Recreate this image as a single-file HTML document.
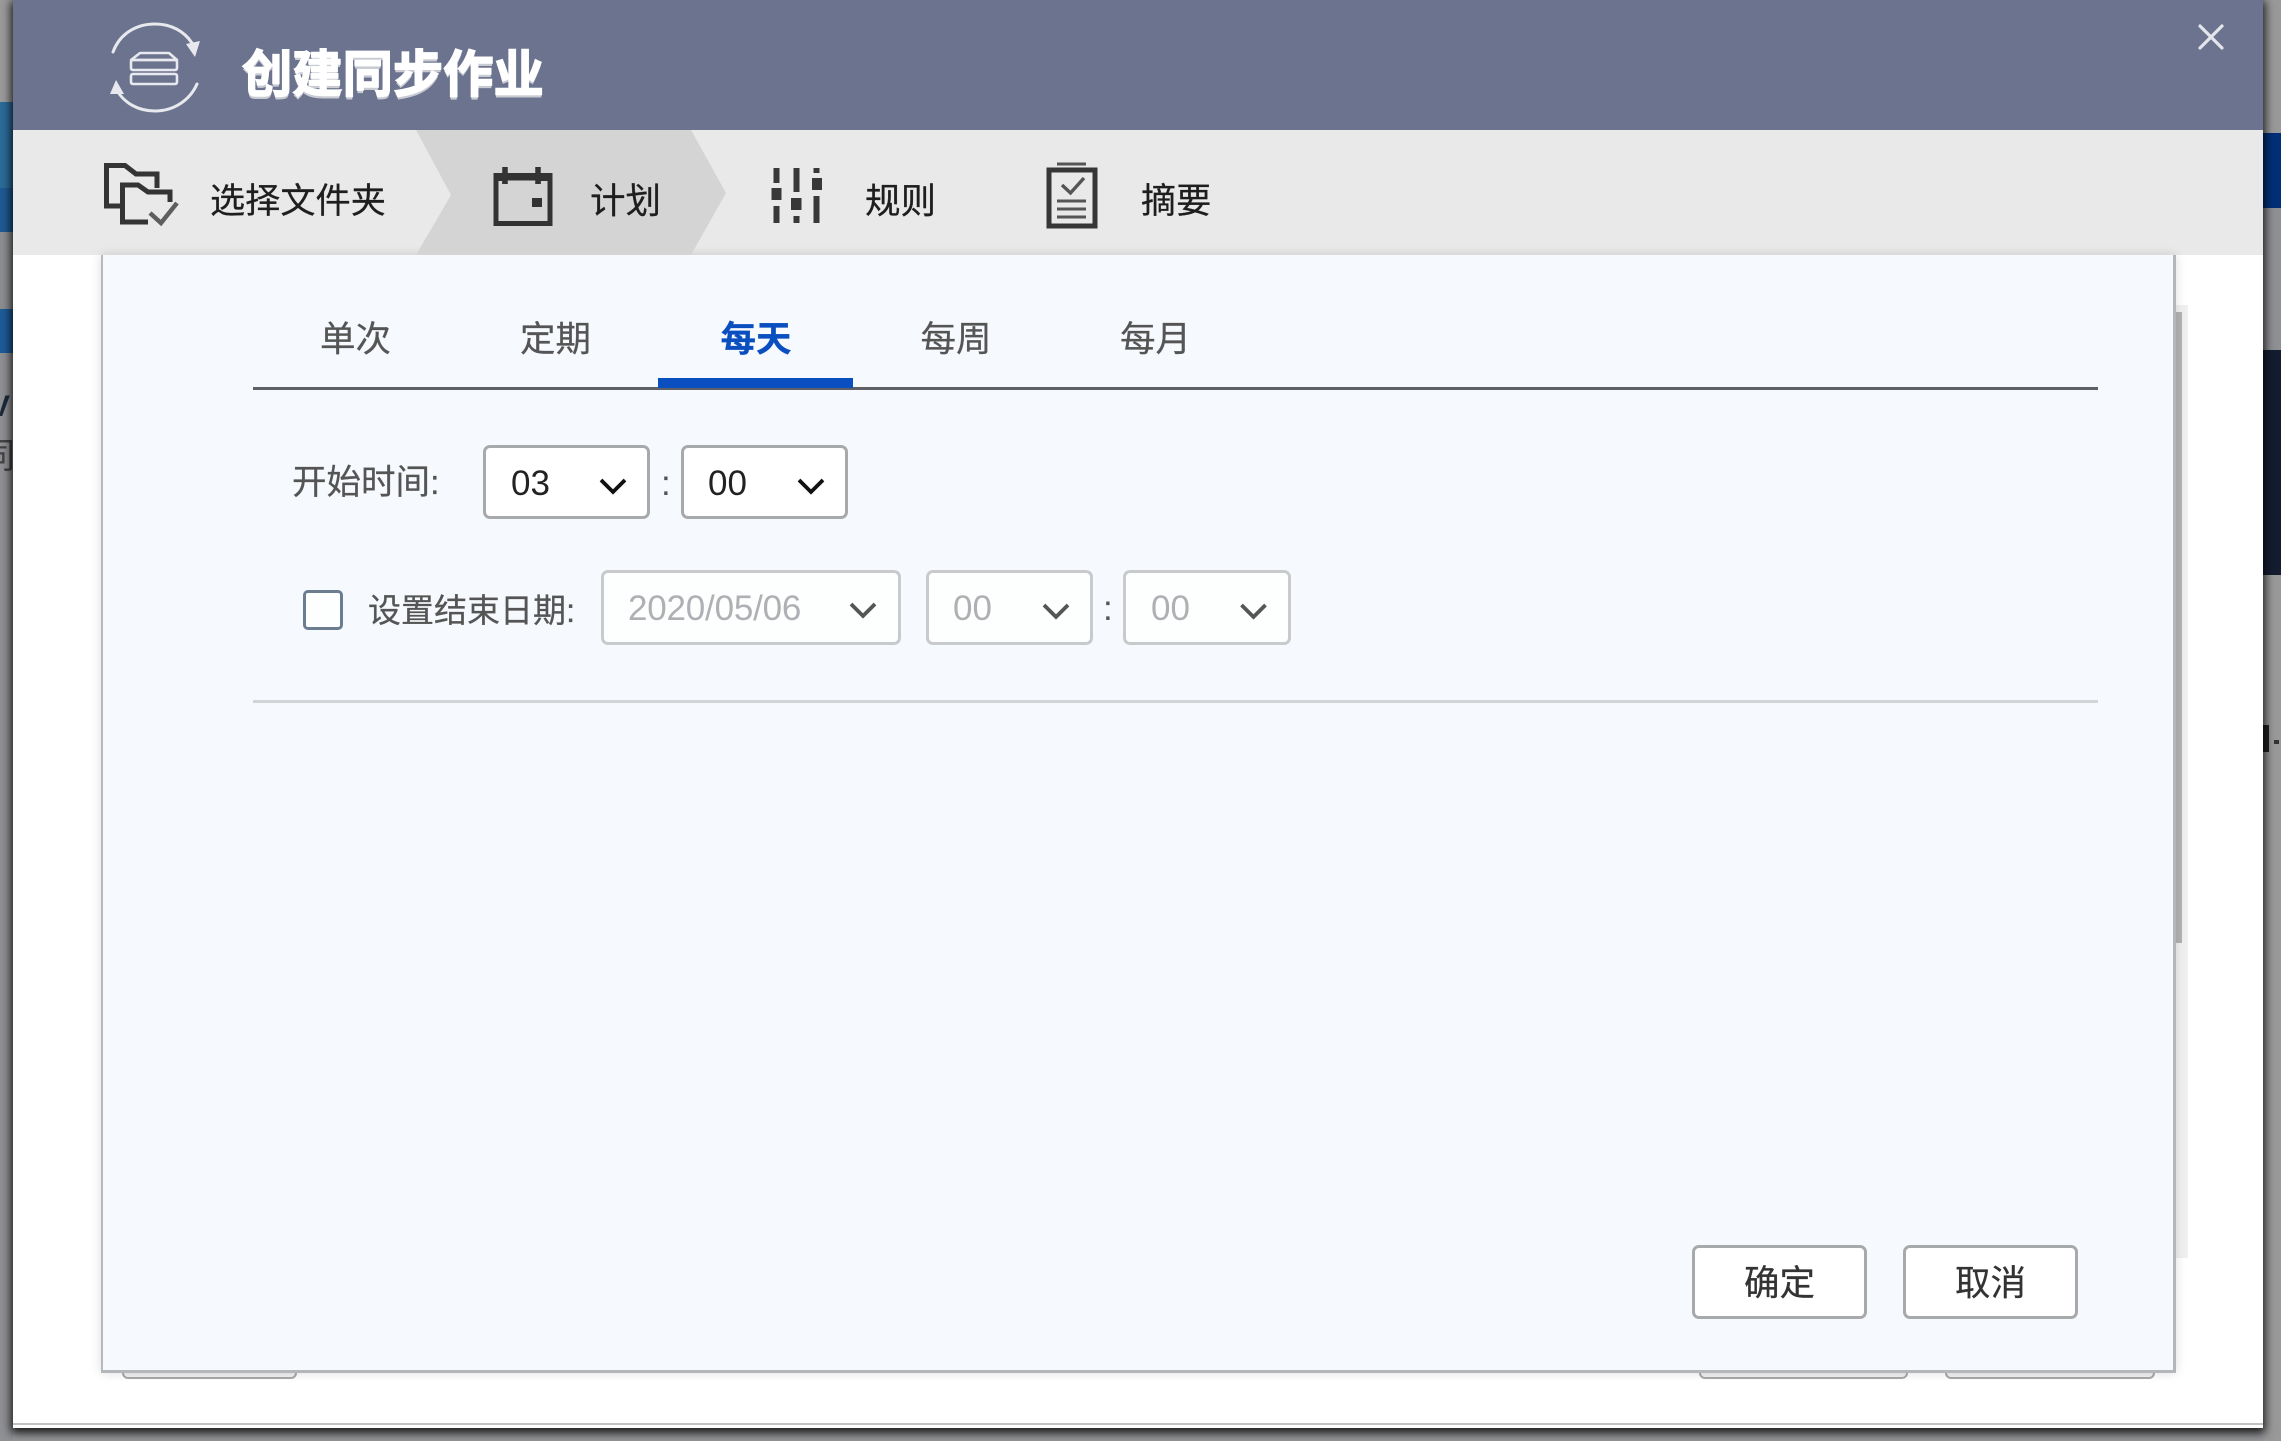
<!DOCTYPE html>
<html lang="zh">
<head>
<meta charset="utf-8">
<title>创建同步作业</title>
<style>
html,body{margin:0;padding:0;width:2281px;height:1441px;overflow:hidden;background:#97989b;}
body{position:relative;font-family:"Liberation Sans","Noto Sans CJK SC",sans-serif;}
.a{position:absolute;}
.t{position:absolute;white-space:nowrap;font-size:35px;line-height:35px;color:#555;}
.c{font-size:35.500px;-webkit-text-stroke:.25px currentColor;}
.box{position:absolute;box-sizing:border-box;background:#fff;border:3px solid #a8a9ab;border-radius:7px;}
.dis{border-color:#c8cacc;background:#fdfefe;}
</style>
</head>
<body>
<!-- background page strips -->
<div class="a" style="left:0;top:0;width:13px;height:102px;background:#9b9b9b"></div>
<div class="a" style="left:0;top:102px;width:13px;height:86px;background:#2b6c9a"></div>
<div class="a" style="left:0;top:188px;width:13px;height:44px;background:#1f5a94"></div>
<div class="a" style="left:0;top:232px;width:13px;height:77px;background:#8d8e92"></div>
<div class="a" style="left:0;top:309px;width:13px;height:44px;background:#1d5c9a"></div>
<div class="a" style="left:0;top:353px;width:13px;height:1088px;background:#909195"></div>
<div class="t" style="left:-10px;top:392px;font-size:30px;line-height:30px;font-weight:700;color:#1c2a3a">V</div>
<div class="t" style="left:-20px;top:439px;color:#444">同</div>
<div class="a" style="left:2263px;top:0;width:18px;height:133px;background:#999"></div>
<div class="a" style="left:2263px;top:133px;width:18px;height:75px;background:#002f78"></div>
<div class="a" style="left:2263px;top:208px;width:18px;height:142px;background:#8f9093"></div>
<div class="a" style="left:2263px;top:350px;width:18px;height:225px;background:#141d30"></div>
<div class="a" style="left:2263px;top:575px;width:18px;height:866px;background:#999"></div>
<div class="a" style="left:2263px;top:725px;width:6px;height:27px;background:#222"></div>
<div class="a" style="left:2274px;top:740px;width:5px;height:4px;background:#333"></div>

<!-- window -->
<div class="a" style="left:13px;top:0;width:2250px;height:1428px;background:#fff;box-shadow:0 3px 9px 2px rgba(0,0,0,.85)"></div>
<div class="a" style="left:13px;top:0;width:2250px;height:130px;background:#6b738f"></div>
<div class="a" style="left:13px;top:130px;width:2250px;height:125px;background:#e9e9e9"></div>
<div class="a" style="left:13px;top:1423px;width:2250px;height:2px;background:#c2c2c2"></div>

<!-- buttons behind the panel -->
<div class="a" style="left:122px;top:1340px;width:175px;height:39px;box-sizing:border-box;border:2.500px solid #a8a8a8;border-radius:6px;background:#f1f1f1"></div>
<div class="a" style="left:1699px;top:1340px;width:209px;height:39px;box-sizing:border-box;border:2.500px solid #a8a8a8;border-radius:6px;background:#f1f1f1"></div>
<div class="a" style="left:1945px;top:1340px;width:210px;height:39px;box-sizing:border-box;border:2.500px solid #a8a8a8;border-radius:6px;background:#f1f1f1"></div>

<!-- scrollbar behind -->
<div class="a" style="left:2176px;top:305px;width:12px;height:953px;background:#f0f0f0"></div>
<div class="a" style="left:2176px;top:312px;width:6px;height:631px;background:#b3b3b3"></div>

<!-- inner panel -->
<div class="a" style="left:101px;top:255px;width:2075px;height:1118px;box-sizing:border-box;background:#f6f9fd;border-left:2.500px solid #b6b8bc;border-right:3px solid #b4b6b9;border-bottom:3px solid #b4b6b9;box-shadow:0 0 10px rgba(0,0,0,.14)"></div>

<!-- graphics -->
<svg class="a" style="left:0;top:0" width="2281" height="1441" viewBox="0 0 2281 1441" fill="none">
  <!-- active step -->
  <path d="M416 130H691L726 193L691 255H416L451 195Z" fill="#d4d4d4"/>
  <!-- sync icon -->
  <g stroke="#e8e9ee" stroke-width="3" stroke-linecap="round" stroke-linejoin="round">
    <path d="M113 52C120 33 137 24 155 24C171 24 184 31 192 43"/>
    <path d="M197 84C190 100 174 111 155 111C138 111 125 103 118 92"/>
    <path d="M140 53H169L177 60H131Z" stroke-width="2.600"/>
    <rect x="131" y="60" width="46" height="10" rx="2" stroke-width="2.600"/>
    <rect x="131" y="74" width="46" height="10" rx="2" stroke-width="2.600"/>
  </g>
  <path d="M186 44L200 41L195 57Z" fill="#e8e9ee"/>
  <path d="M110 94L124 94L116 80Z" fill="#e8e9ee"/>
  <!-- close -->
  <path d="M2200 26L2222 48M2222 26L2200 48" stroke="#e3e5ea" stroke-width="3.200" stroke-linecap="round"/>
  <!-- folders icon -->
  <path d="M120 206H106.500V165.500H125L136 174H157V188" stroke="#343434" stroke-width="5"/>
  <path d="M148 222H122.500V185H138L148 192H170V202" stroke="#343434" stroke-width="5"/>
  <path d="M150 213L161 223L177 203" stroke="#5e5e5e" stroke-width="4.500"/>
  <!-- calendar icon -->
  <rect x="496" y="175.500" width="54" height="48" stroke="#333" stroke-width="5"/>
  <path d="M494 177H552" stroke="#333" stroke-width="8"/>
  <path d="M505 167V184M538 167V184" stroke="#333" stroke-width="5.500"/>
  <path d="M507 182H536" stroke="#d4d4d4" stroke-width="3"/>
  <path d="M505 175V184M538 175V184" stroke="#333" stroke-width="5.500"/>
  <rect x="532" y="198" width="10" height="9" fill="#333"/>
  <!-- sliders icon -->
  <g fill="#383838">
    <rect x="773.500" y="168" width="6" height="15"/><rect x="771.500" y="188" width="10" height="12"/><rect x="773.500" y="206" width="6" height="17"/>
    <rect x="793.500" y="168" width="6" height="24"/><rect x="791" y="198" width="10.500" height="12"/><rect x="793.500" y="216" width="6" height="7"/>
    <rect x="813.500" y="168" width="6" height="5"/><rect x="812" y="178" width="10" height="12"/><rect x="813.500" y="196" width="6" height="27"/>
  </g>
  <!-- clipboard icon -->
  <rect x="1049" y="170" width="46" height="56" stroke="#363636" stroke-width="5"/>
  <path d="M1057 164H1086" stroke="#555" stroke-width="3"/>
  <path d="M1062 185L1070.500 193L1084 178" stroke="#555" stroke-width="3.400"/>
  <path d="M1057 201H1086M1057 209H1086M1057 217H1086" stroke="#555" stroke-width="3"/>
</svg>

<!-- title -->
<div class="t" style="left:242px;top:50px;font-size:50.300px;line-height:50px;font-weight:700;color:#fff;-webkit-text-stroke:1.500px #fff;text-shadow:0 3px 0 #c9cbd3">创建同步作业</div>

<!-- steps -->
<div class="t c" style="left:210px;top:184px;font-size:35.200px;color:#1e1e1e">选择文件夹</div>
<div class="t c" style="left:590px;top:184px;color:#1e1e1e">计划</div>
<div class="t c" style="left:865px;top:184px;color:#1e1e1e">规则</div>
<div class="t c" style="left:1141px;top:184px;font-size:35.200px;color:#1e1e1e">摘要</div>

<!-- tabs -->
<div class="t c" style="left:320px;top:322px">单次</div>
<div class="t c" style="left:520px;top:322px">定期</div>
<div class="t c" style="left:720.500px;top:322px;color:#0a4fc0;font-weight:700">每天</div>
<div class="t c" style="left:920.500px;top:322px">每周</div>
<div class="t c" style="left:1120px;top:322px">每月</div>
<div class="a" style="left:253px;top:387px;width:1845px;height:3px;background:#5f6065"></div>
<div class="a" style="left:658px;top:378px;width:195px;height:10px;background:#0a4fc0"></div>

<!-- start time -->
<div class="t c" style="left:292px;top:466px;font-size:34.500px">开始时间:</div>
<div class="box" style="left:483px;top:445px;width:167px;height:74px"></div>
<div class="t" style="left:511px;top:466px;color:#222">03</div>
<div class="t" style="left:661px;top:466px">:</div>
<div class="box" style="left:681px;top:445px;width:167px;height:74px"></div>
<div class="t" style="left:708px;top:466px;color:#222">00</div>

<!-- end date -->
<div class="a" style="left:303px;top:590px;width:40px;height:40px;box-sizing:border-box;border:3px solid #6d7d90;border-radius:5px;background:#fdfefe"></div>
<div class="t c" style="left:368px;top:593px;font-size:33px">设置结束日期:</div>
<div class="box dis" style="left:601px;top:570px;width:300px;height:75px"></div>
<div class="t" style="left:628px;top:591px;color:#aeb0b3;letter-spacing:-.2px">2020/05/06</div>
<div class="box dis" style="left:926px;top:570px;width:167px;height:75px"></div>
<div class="t" style="left:953px;top:591px;color:#aeb0b3">00</div>
<div class="t" style="left:1103px;top:591px">:</div>
<div class="box dis" style="left:1123px;top:570px;width:168px;height:75px"></div>
<div class="t" style="left:1151px;top:591px;color:#aeb0b3">00</div>

<div class="a" style="left:253px;top:700px;width:1845px;height:3px;background:#d2d4d6"></div>

<!-- action buttons -->
<div class="box" style="left:1692px;top:1245px;width:175px;height:74px"></div>
<div class="t c" style="left:1744px;top:1266px;color:#333">确定</div>
<div class="box" style="left:1903px;top:1245px;width:175px;height:74px"></div>
<div class="t c" style="left:1955px;top:1266px;color:#333">取消</div>

<!-- chevrons above select boxes -->
<svg class="a" style="left:0;top:0" width="2281" height="1441" viewBox="0 0 2281 1441" fill="none">
  <g stroke-width="3.800">
    <path d="M601 480L613 492L625 480" stroke="#111"/>
    <path d="M799 480L811 492L823 480" stroke="#111"/>
    <g stroke="#555">
      <path d="M851 604L863 616L875 604"/>
      <path d="M1044 605L1056 617L1068 605"/>
      <path d="M1241.500 605L1253.500 617L1265.500 605"/>
    </g>
  </g>
</svg>
</body>
</html>
